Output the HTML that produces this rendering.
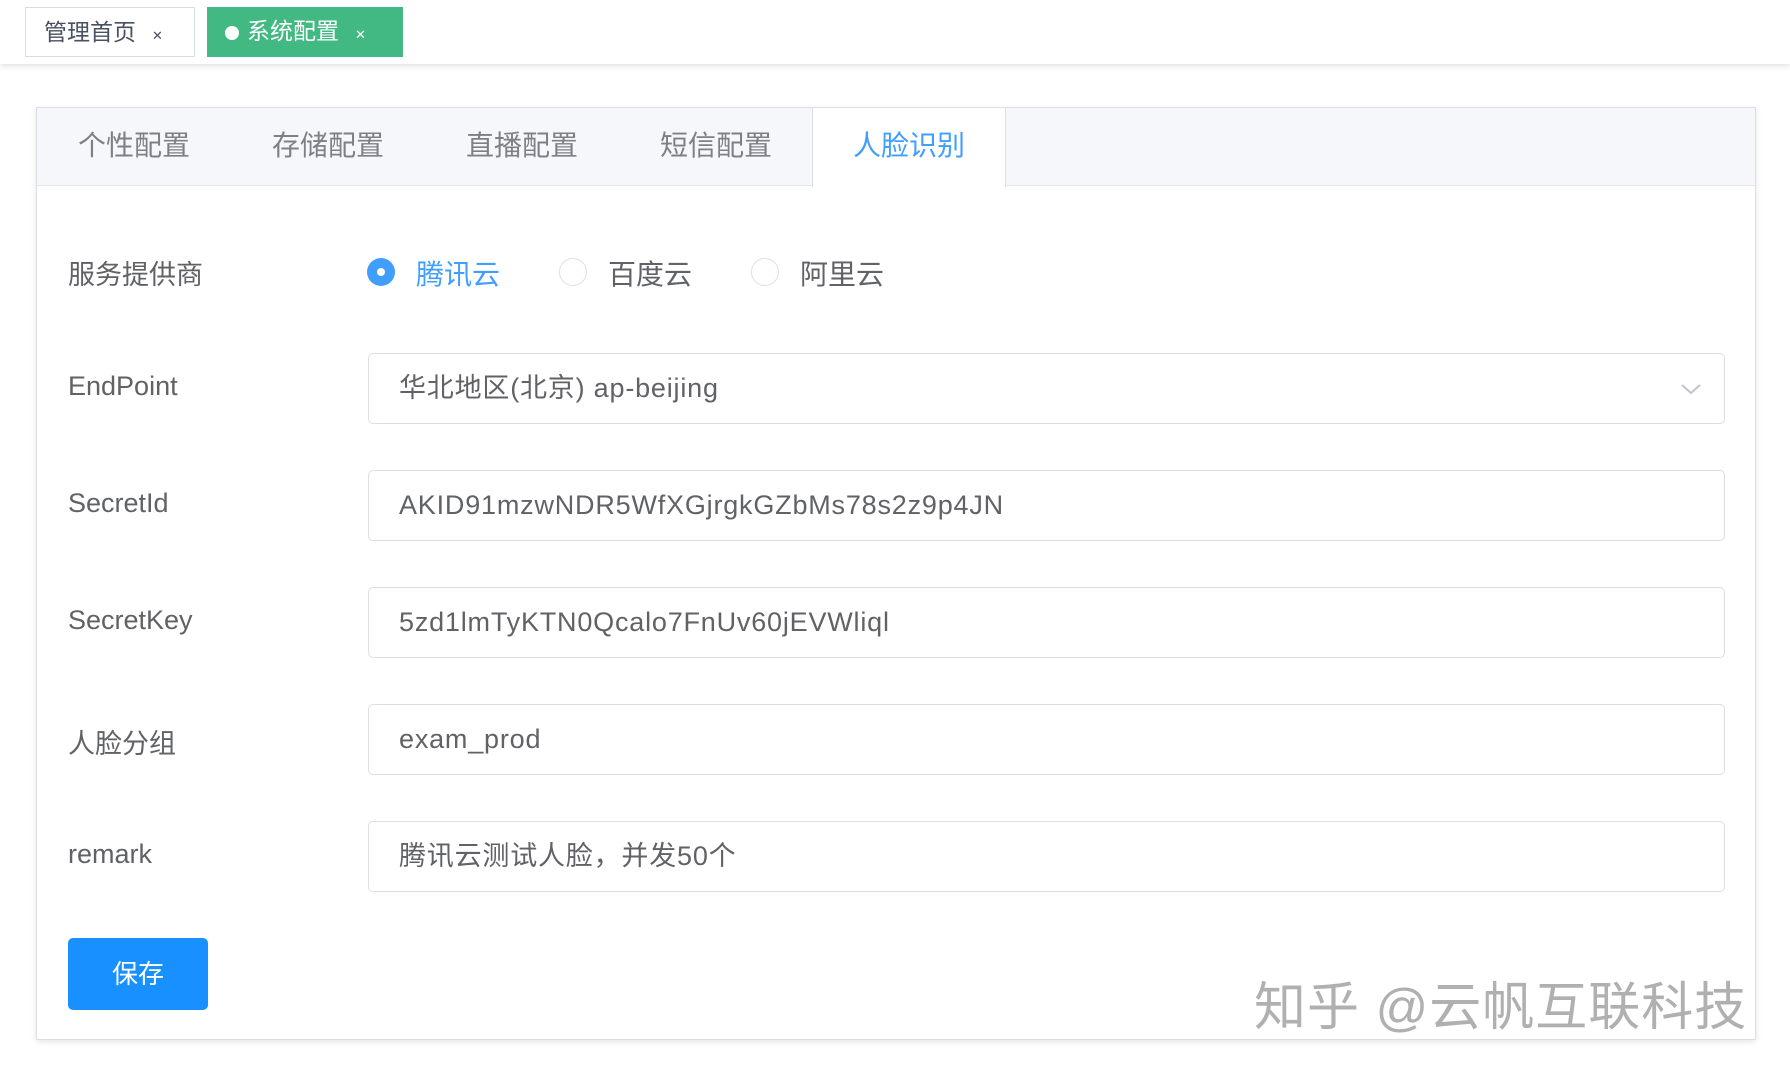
<!DOCTYPE html>
<html><head><meta charset="utf-8"><style>
*{box-sizing:border-box;margin:0;padding:0}
body{width:1790px;height:1076px;background:#fff;font-family:"Liberation Sans","Noto Sans CJK SC",sans-serif;position:relative;overflow:hidden;color:#606266}
.top{position:absolute;left:0;top:0;width:1790px;height:64px;background:#fff;box-shadow:0 2px 6px rgba(0,0,0,.12)}
.tag{position:absolute;top:7px;height:50px;line-height:48px;font-size:23px;padding-left:18px}
.t1{left:25px;width:170px;border:1px solid #d8dce5;color:#495060}
.t2{left:207px;width:196px;background:#42b983;color:#fff}
.t2 .dot{display:inline-block;width:14px;height:14px;border-radius:50%;background:#fff;margin-right:8px;vertical-align:-1px}
.x{font-size:13px;margin-left:16px}
.card{position:absolute;left:36px;top:107px;width:1720px;height:933px;border:1px solid #dcdfe6;box-shadow:0 2px 6px rgba(0,0,0,.1);background:#fff}
.head{height:78px;background:#f5f7fa;border-bottom:1px solid #e4e7ed;position:relative}
.tab{position:absolute;top:0;width:194px;height:78px;line-height:76px;text-align:center;font-size:28px;color:#7d8087}
.tab.act{background:#fff;color:#409eff;border-left:1px solid #dcdfe6;border-right:1px solid #dcdfe6;height:79px}
.lab{position:absolute;left:31px;font-size:27px;color:#606266}
.inp{position:absolute;left:331px;width:1357px;height:71px;border:1px solid #dcdfe6;border-radius:5px;line-height:69px;padding-left:30px;font-size:27px;letter-spacing:.8px;color:#606266}
.r{position:absolute;top:150px;width:28px;height:28px;border-radius:50%;border:1px solid #dcdfe6}
.r.on{border:none;background:#409eff}
.r.on:after{content:"";position:absolute;left:10px;top:10px;width:8px;height:8px;border-radius:50%;background:#fff}
.rl{position:absolute;top:145px;font-size:28px;color:#606266}
.btn{position:absolute;left:31px;top:830px;width:140px;height:72px;background:#1890ff;border-radius:5px;color:#fff;font-size:26px;text-align:center;line-height:72px}
.wm{position:absolute;left:1254px;top:965px;font-size:52px;color:#b0b0b0;white-space:nowrap;letter-spacing:1px}
</style></head><body>
<div class="top">
<div class="tag t1">管理首页<span class="x">✕</span></div>
<div class="tag t2"><span class="dot"></span>系统配置<span class="x">✕</span></div>
</div>
<div class="card">
<div class="head">
<div class="tab" style="left:0">个性配置</div>
<div class="tab" style="left:194px">存储配置</div>
<div class="tab" style="left:388px">直播配置</div>
<div class="tab" style="left:582px">短信配置</div>
<div class="tab act" style="left:775px">人脸识别</div>
</div>
<div class="lab" style="top:145px">服务提供商</div>
<div class="r on" style="left:330px"></div><div class="rl" style="left:379px;color:#409eff">腾讯云</div>
<div class="r" style="left:522px"></div><div class="rl" style="left:571px">百度云</div>
<div class="r" style="left:714px"></div><div class="rl" style="left:763px">阿里云</div>
<div class="lab" style="top:263px">EndPoint</div>
<div class="inp" style="top:245px">华北地区(北京) ap-beijing<svg style="position:absolute;right:22px;top:28px" width="22" height="14" viewBox="0 0 22 14"><path d="M2 3l9 8 9-8" fill="none" stroke="#c0c4cc" stroke-width="2"/></svg></div>
<div class="lab" style="top:380px">SecretId</div>
<div class="inp" style="top:362px">AKID91mzwNDR5WfXGjrgkGZbMs78s2z9p4JN</div>
<div class="lab" style="top:497px">SecretKey</div>
<div class="inp" style="top:479px">5zd1lmTyKTN0Qcalo7FnUv60jEVWliql</div>
<div class="lab" style="top:614px">人脸分组</div>
<div class="inp" style="top:596px">exam_prod</div>
<div class="lab" style="top:731px">remark</div>
<div class="inp" style="top:713px">腾讯云测试人脸，并发50个</div>
<div class="btn">保存</div>
</div>
<div class="wm">知乎 @云帆互联科技</div>
</body></html>
